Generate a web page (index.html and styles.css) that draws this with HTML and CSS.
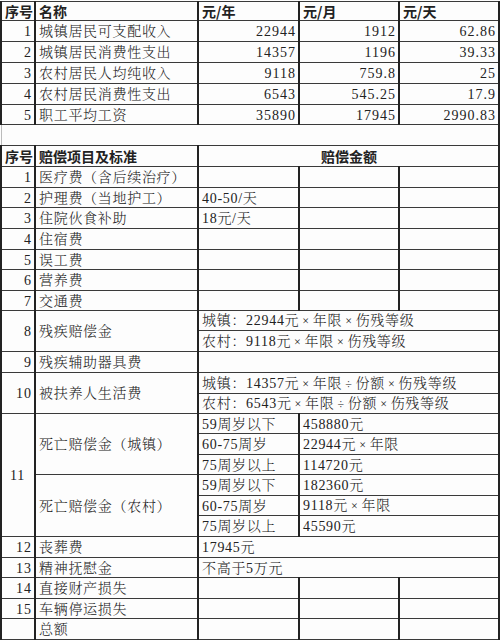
FILE: index.html
```html
<!DOCTYPE html>
<html lang="zh-CN">
<head>
<meta charset="utf-8">
<title>赔偿计算表</title>
<link rel="stylesheet" href="styles.css">
</head>
<body>
<table class="sheet">
<colgroup><col class="c-no"><col class="c-name"><col class="c-a"><col class="c-b"><col class="c-c"></colgroup>
<tbody>
<tr class="h19 hd"><td>序号</td><td>名称</td><td>元/年</td><td>元/月</td><td>元/天</td></tr>
<tr><td class="n">1</td><td>城镇居民可支配收入</td><td class="n">22944</td><td class="n">1912</td><td class="n">62.86</td></tr>
<tr><td class="n">2</td><td>城镇居民消费性支出</td><td class="n">14357</td><td class="n">1196</td><td class="n">39.33</td></tr>
<tr><td class="n">3</td><td>农村居民人均纯收入</td><td class="n">9118</td><td class="n">759.8</td><td class="n">25</td></tr>
<tr><td class="n">4</td><td>农村居民消费性支出</td><td class="n">6543</td><td class="n">545.25</td><td class="n">17.9</td></tr>
<tr class="h20"><td class="n">5</td><td>职工平均工资</td><td class="n">35890</td><td class="n">17945</td><td class="n">2990.83</td></tr>
<tr class="blank"><td colspan="5"></td></tr>
<tr class="hd"><td>序号</td><td>赔偿项目及标准</td><td colspan="3" class="c">赔偿金额</td></tr>
<tr><td class="n">1</td><td>医疗费（含后续治疗）</td><td></td><td></td><td></td></tr>
<tr class="h20"><td class="n">2</td><td>护理费（当地护工）</td><td>40-50/天</td><td></td><td></td></tr>
<tr><td class="n">3</td><td>住院伙食补助</td><td>18元/天</td><td></td><td></td></tr>
<tr><td class="n">4</td><td>住宿费</td><td></td><td></td><td></td></tr>
<tr class="h20"><td class="n">5</td><td>误工费</td><td></td><td></td><td></td></tr>
<tr><td class="n">6</td><td>营养费</td><td></td><td></td><td></td></tr>
<tr class="h20"><td class="n">7</td><td>交通费</td><td></td><td></td><td></td></tr>
<tr class="h20"><td class="n" rowspan="2">8</td><td rowspan="2">残疾赔偿金</td><td colspan="3">城镇：22944元<span class="op">×</span>年限<span class="op">×</span>伤残等级</td></tr>
<tr><td colspan="3">农村：9118元<span class="op">×</span>年限<span class="op">×</span>伤残等级</td></tr>
<tr><td class="n">9</td><td>残疾辅助器具费</td><td colspan="3"></td></tr>
<tr><td class="n" rowspan="2">10</td><td rowspan="2">被扶养人生活费</td><td colspan="3">城镇：14357元<span class="op">×</span>年限<span class="op">÷</span>份额<span class="op">×</span>伤残等级</td></tr>
<tr class="h20"><td colspan="3">农村：6543元<span class="op">×</span>年限<span class="op">÷</span>份额<span class="op">×</span>伤残等级</td></tr>
<tr class="h20"><td class="n11" rowspan="6">11</td><td rowspan="3">死亡赔偿金（城镇）</td><td>59周岁以下</td><td colspan="2">458880元</td></tr>
<tr><td>60-75周岁</td><td colspan="2">22944元<span class="op">×</span>年限</td></tr>
<tr class="h20"><td>75周岁以上</td><td colspan="2">114720元</td></tr>
<tr><td rowspan="3">死亡赔偿金（农村）</td><td>59周岁以下</td><td colspan="2">182360元</td></tr>
<tr class="h20"><td>60-75周岁</td><td colspan="2">9118元<span class="op">×</span>年限</td></tr>
<tr><td>75周岁以上</td><td colspan="2">45590元</td></tr>
<tr><td class="n">12</td><td>丧葬费</td><td colspan="3">17945元</td></tr>
<tr class="h20"><td class="n">13</td><td>精神抚慰金</td><td colspan="3">不高于5万元</td></tr>
<tr><td class="n">14</td><td>直接财产损失</td><td></td><td></td><td></td></tr>
<tr class="h20"><td class="n">15</td><td>车辆停运损失</td><td></td><td></td><td></td></tr>
<tr><td></td><td>总额</td><td></td><td></td><td></td></tr>
</tbody>
</table>
</body>
</html>
```

FILE: styles.css
```css
html, body {
  margin: 0;
  padding: 0;
  background: #fdfdfd;
}

body {
  padding-top: 1px;
  font-family: "Liberation Serif", "Noto Serif CJK SC", "Noto Sans CJK SC", serif;
  font-size: 14px;
  font-weight: 300;
  color: #222;
}

.sheet {
  width: 498px;
  border-collapse: collapse;
  table-layout: fixed;
}

.c-no { width: 34px; }
.c-name { width: 163px; }
.c-a { width: 101px; }
.c-b { width: 100px; }
.c-c { width: 100px; }

.sheet tr { height: 21px; }
.sheet tr.h20 { height: 20px; }
.sheet tr.h19 { height: 19px; }

.sheet td {
  border-top: 1px solid #3a3a3a;
  border-bottom: 1px solid #3a3a3a;
  border-left: 2px solid #222;
  border-right: 2px solid #222;
  padding: 1px 2px 0 3px;
  line-height: 17px;
  white-space: nowrap;
  overflow: hidden;
  vertical-align: middle;
  text-align: left;
  letter-spacing: 0.7px;
}

.sheet td.n {
  text-align: right;
  padding-right: 2px;
  padding-left: 0;
  letter-spacing: 1px;
}

.sheet td.n11 {
  text-align: left;
  padding-left: 8px;
}

.op {
  margin: 0 3px;
  font-size: 12px;
}

.sheet .hd td {
  font-family: "Noto Sans CJK SC", sans-serif;
  font-weight: 700;
  letter-spacing: 0;
}

.sheet .hd td.c {
  text-align: center;
}

.sheet .blank td {
  border-left-color: #bbb;
  border-left-width: 1px;
}
```
